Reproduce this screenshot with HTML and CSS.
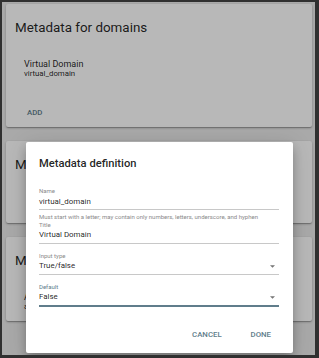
FILE: index.html
```html
<!DOCTYPE html>
<html lang="en">
<head>
    <meta charset="UTF-8">
    <meta name="viewport" content="width=device-width, initial-scale=1.0">
    <title>Metadata</title>
    <link rel="stylesheet" href="styles.css">
</head>
<body>
    <div class="app">
        <div class="card card-domains">
            <h2 class="card-title">Metadata for domains</h2>
            <ul class="meta-list">
                <li class="meta-item">
                    <div class="meta-title">Virtual Domain</div>
                    <div class="meta-name">virtual_domain</div>
                </li>
            </ul>
            <div class="card-actions">
                <button class="text-btn">ADD</button>
            </div>
        </div>

        <div class="card card-accounts">
            <h2 class="card-title">Metadata for accounts</h2>
            <ul class="meta-list"></ul>
            <div class="card-actions">
                <button class="text-btn">ADD</button>
            </div>
        </div>

        <div class="card card-aliases">
            <h2 class="card-title">Metadata for aliases</h2>
            <ul class="meta-list">
                <li class="meta-item">
                    <div class="meta-title">Alias owner</div>
                    <div class="meta-name">alias_owner</div>
                </li>
            </ul>
        </div>

        <div class="backdrop"></div>

        <div class="dialog">
            <h3 class="dialog-title">Metadata definition</h3>

            <div class="field has-help">
                <label class="field-label">Name</label>
                <div class="field-input">virtual_domain</div>
                <div class="field-help">Must start with a letter; may contain only numbers, letters, underscore, and hyphen</div>
            </div>

            <div class="field">
                <label class="field-label">Title</label>
                <div class="field-input">Virtual Domain</div>
            </div>

            <div class="field">
                <label class="field-label">Input type</label>
                <div class="field-input select">
                    <span>True/false</span>
                    <svg class="arrow" width="5" height="3" viewBox="0 0 10 5"><path d="M0 0l5 5 5-5z"/></svg>
                </div>
            </div>

            <div class="field focused">
                <label class="field-label">Default</label>
                <div class="field-input select">
                    <span>False</span>
                    <svg class="arrow" width="5" height="3" viewBox="0 0 10 5"><path d="M0 0l5 5 5-5z"/></svg>
                </div>
            </div>

            <div class="dialog-actions">
                <button class="text-btn">CANCEL</button>
                <button class="text-btn">DONE</button>
            </div>
        </div>
    </div>
</body>
</html>
```

FILE: styles.css
```css
* {
    margin: 0;
    padding: 0;
    box-sizing: border-box;
    font-family: Roboto, 'Noto Sans', sans-serif;
}

body {
    background: #303030;
    height: 358px;
    overflow: hidden;
}

.app {
    position: relative;
    margin: 2px 4px 0 2px;
    height: 353px;
    padding: 2px 3px 0 4px;
    background: #ebebeb;
    overflow: hidden;
    display: flex;
    flex-direction: column;
    gap: 14px;
}

.card {
    background: #fff;
    border-radius: 2px;
    padding: 15px 9px 9px;
    flex-shrink: 0;
    box-shadow: 0 1px 3px rgba(0, 0, 0, 0.2), 0 1px 1px rgba(0, 0, 0, 0.14), 0 2px 1px -1px rgba(0, 0, 0, 0.12);
}

.card-domains {
    height: 123px;
}

.card-accounts {
    height: 82px;
}

.card-accounts .meta-list {
    height: 20px;
}

.card-title {
    font-size: 13.4px;
    line-height: 18px;
    font-weight: 400;
    color: rgba(0, 0, 0, 0.87);
}

.meta-list {
    list-style: none;
    margin-top: 22px;
}

.meta-item {
    padding-left: 9px;
    color: rgba(0, 0, 0, 0.87);
}

.meta-title {
    font-size: 9px;
    line-height: 10px;
}

.meta-name {
    font-size: 7.8px;
    line-height: 10px;
}

.card-actions {
    display: flex;
    margin-top: 29px;
    padding-left: 12px;
}

.text-btn {
    background: none;
    border: none;
    color: #607d8b;
    font-size: 7.8px;
    line-height: 10px;
    font-weight: 500;
    cursor: pointer;
}

.backdrop {
    position: absolute;
    inset: 0;
    background: rgba(0, 0, 0, 0.28);
}

.dialog {
    position: absolute;
    left: 24px;
    top: 140px;
    width: 267px;
    height: 211px;
    background: #fff;
    border-radius: 2px;
    padding: 14px 14px 0 13px;
    box-shadow: 0 6px 10px rgba(0, 0, 0, 0.22), 0 3px 22px rgba(0, 0, 0, 0.14);
}

.dialog-title {
    font-size: 11.2px;
    line-height: 15px;
    font-weight: 500;
    color: rgba(0, 0, 0, 0.87);
    margin-bottom: 16px;
}

.field {
    margin-bottom: 8px;
}

.field.has-help {
    margin-bottom: 1px;
}

.field-label {
    display: block;
    font-size: 6px;
    line-height: 7px;
    color: #8a8a8a;
}

.field-input {
    font-size: 7.9px;
    line-height: 10px;
    padding: 2.5px 0;
    color: rgba(0, 0, 0, 0.87);
    border-bottom: 1px solid #c8c8c8;
}

.field-input.select {
    display: flex;
    justify-content: space-between;
    align-items: center;
}

.arrow {
    fill: #757575;
    margin-right: 4px;
}

.field-help {
    font-size: 6px;
    line-height: 7px;
    margin-top: 2.5px;
    color: #8a8a8a;
    white-space: nowrap;
}

.field.focused .field-label {
    color: #607d8b;
}

.field.focused .field-input {
    border-bottom: 2px solid #607d8b;
}

.dialog-actions {
    display: flex;
    justify-content: flex-end;
    gap: 29px;
    margin-top: 23px;
    padding-right: 8px;
}
```
